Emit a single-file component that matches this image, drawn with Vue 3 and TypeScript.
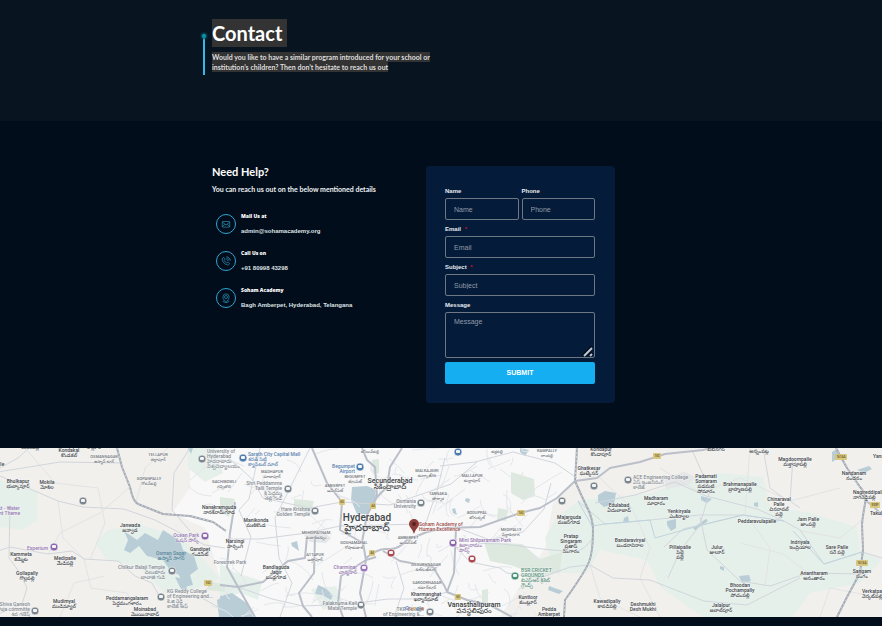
<script setup lang="ts">
import { ref } from 'vue'

type Kind = 'town' | 'area' | 'city' | 'metro' | 'grey' | 'violet' | 'blue' | 'red' | 'green' | 'water'
type Anchor = 'start' | 'middle' | 'end'
interface Place { x: number; y: number; kind: Kind; anchor: Anchor; lines: string[]; step: number }
interface Marker { x: number; y: number; color: string }

const name = ref('')
const phone = ref('')
const email = ref('')
const subject = ref('')
const message = ref('')

const contacts = [
  { icon: 'mail', title: 'Mail Us at', detail: 'admin@sohamacademy.org' },
  { icon: 'phone', title: 'Call Us on', detail: '+91 80998 43298' },
  { icon: 'pin', title: 'Soham Academy', detail: 'Bagh Amberpet, Hyderabad, Telangana' },
]

function place(x: number, y: number, text: string, kind: Kind = 'town', anchor: Anchor = 'middle'): Place {
  const step = kind === 'metro' ? 10 : kind === 'city' ? 6 : 5
  return { x, y, kind, anchor, lines: text.split('|'), step }
}

const places: Place[] = [
  place(69, 4, 'Kondakal|కొండకల్'),
  place(30, 1, 'శంకర్‌పల్లి'),
  place(94, 1, 'కొల్లూర్'),
  place(104, 10, 'OSMANNAGAR|ఉస్మాన్ నగర్', 'area'),
  place(158, 8, 'TELLAPUR|తెల్లాపూర్', 'area'),
  place(149, 32, 'GOPANPALLY|గోపన్‌పల్లి', 'area'),
  place(-12, 18, 'Mokille', 'town', 'start'),
  place(18, 35, 'Bhulkapur|భుల్కాపూర్'),
  place(47, 36, 'Mokila|మోకిల'),
  place(-8, 62, 'Nest - Water|ment Theme', 'violet', 'start'),
  place(130, 79, 'Janwada|జన్వాడ'),
  place(48, 102, 'Experium', 'violet', 'end'),
  place(199, 89, 'Ocean Park|ఓషన్ పార్క్', 'violet', 'end'),
  place(171, 107, 'Osman Sagar|ఉస్మాన్ సాగర్', 'water'),
  place(200, 103, 'Gandipet|గండిపేట్'),
  place(21, 108, 'Kammeta|కమ్మెట'),
  place(65, 112, 'Medipalle|మేడిపల్లె'),
  place(27, 127, 'Gollapally|గొల్లపల్లి'),
  place(165, 121, 'Chilkur Balaji Temple|చిలుకూరు|బాలాజీ గుడి', 'grey', 'end'),
  place(167, 145, 'KG Reddy College|of Engineering and...|కె.జి రెడ్డి|కాలేజ్ ఆఫ్', 'grey', 'start'),
  place(64, 155, 'Mudimyal|ముడిమ్యాల్'),
  place(127, 152, 'Peddamangalaram|పెద్దమంగళారం'),
  place(145, 163, 'Moinabad|మొయినాబాద్'),
  place(30, 158, 'Shiva Ganesh|Puja committe|శివ గణేష్', 'grey', 'end'),
  place(207, 5, 'University of|Hyderabad|హైదరాబాదు|విశ్వవిద్యాలయం', 'grey', 'start'),
  place(248, 8, 'Sarath City Capital Mall|శరత్ సిటీ|క్యాపిటల్ మాల్', 'blue', 'start'),
  place(272, 25, 'MADHAPUR|మాదాపూర్', 'area'),
  place(224, 35, 'GACHIBOWLI|గచ్చిబౌలి', 'area'),
  place(282, 37, 'Shri Peddamma|Talli Temple|శ్రీ పెద్దమ్మ|తల్లి గుడి', 'grey', 'end'),
  place(310, 63, 'Hare Krishna|Golden Temple', 'grey', 'end'),
  place(219, 61, 'Nanakramguda|నానక్‌రామ్‌గూడ'),
  place(256, 74, 'Manikonda|మణికొండ'),
  place(235, 95, 'Narsingi|నార్సింగి'),
  place(230, 116, 'Forestrek Park', 'grey'),
  place(316, 86, 'MEHDIPATNAM|మెహదీపట్నం', 'area'),
  place(315, 108, 'ATTAPUR|అత్తాపూర్', 'area'),
  place(276, 121, 'Bandlaguda|Jagir|బండ్లగూడ'),
  place(357, 121, 'Charminar|చార్మినార్', 'violet', 'end'),
  place(357, 157, 'Falaknuma Kali|Mata Temple', 'grey', 'end'),
  place(355, 20, 'Begumpet|Airport', 'blue', 'end'),
  place(370, 5, 'బోయిన్‌పల్లి', 'area'),
  place(355, 30, 'BEGUMPET|బేగంపేట్', 'area'),
  place(335, 39, 'AMEERPET|అమీర్‌పేట్', 'area'),
  place(390, 35, 'Secunderabad|సికింద్రాబాద్', 'city'),
  place(427, 24, 'MALKAJGIRI|మల్కాజ్‌గిరి', 'area'),
  place(367, 73, 'Hyderabad|హైదరాబాద్', 'metro'),
  place(354, 96, 'GOSHAMAHAL|గోషామహల్', 'area'),
  place(416, 55, 'Osmania|University', 'grey', 'end'),
  place(438, 47, 'TARNAKA|తార్నాక', 'area'),
  place(408, 91, 'AMBERPET|అంబర్‌పేట్', 'area'),
  place(419, 78, 'Soham Academy of|Human Excellence', 'red', 'start'),
  place(426, 118, 'DILSUKHNAGAR|దిల్‌సుఖ్‌నగర్', 'area'),
  place(427, 136, 'SAROORNAGAR|సరూర్‌నగర్', 'area'),
  place(426, 148, 'Kharmanghat|ఖర్మాన్‌ఘాట్'),
  place(424, 163, 'TKR College|of Engineering &...', 'grey', 'end'),
  place(497, 0, 'CHERLAPALLY|చర్లపల్లి', 'area'),
  place(547, 4, 'RAMPALLY|రాంపల్లి', 'area'),
  place(472, 29, 'MALLAPUR|మల్లాపూర్', 'area'),
  place(477, 66, 'BODUPPAL|బోడుప్పల్', 'area'),
  place(511, 83, 'MEDIPALLY|పీర్జాదిగూడ', 'area'),
  place(601, 3, 'Kondapur|కొండాపూర్'),
  place(589, 22, 'Ghatkesar|ఘట్కేసర్'),
  place(459, 94, 'Mini Shilparamam Park|శిల్పారామం|పార్క్', 'violet', 'start'),
  place(521, 124, 'BSR CRICKET|GROUNDS|బిఎస్ఆర్ క్రికెట్|గ్రౌండ్స్', 'green', 'start'),
  place(474, 159, 'Vanasthalipuram|వనస్థలిపురం', 'city'),
  place(528, 151, 'Kuntloor|కుంట్లూర్'),
  place(549, 163, 'Pedda|Amberpet'),
  place(569, 71, 'Majarguda|మజర్‌గూడ'),
  place(571, 90, 'Pratap|Singaram|ప్రతాప్|సింగారం'),
  place(619, 59, 'Edulabad|ఏదులాబాద్'),
  place(656, 52, 'Madharam|మాధారం'),
  place(630, 94, 'Bandaraviryal|బండరావిరాల'),
  place(633, 31, 'ACE Engineering College|ఏస్ ఇంజనీరింగ్|కాలేజ్', 'grey', 'start'),
  place(607, 155, 'Kawadipally|కావడిపల్లి'),
  place(643, 158, 'Deshmukhi|Desh Mukhi'),
  place(706, 30, 'Padamati|Somaram|పడమటి|సోమారం'),
  place(740, 38, 'Brahmanapalle|బ్రాహ్మణపల్లి'),
  place(759, 5, 'అన్నంపట్ల'),
  place(716, 3, 'బీబీనగర్'),
  place(795, 13, 'Magdoompalle|మక్తాపూపల్లి'),
  place(779, 53, 'Chinaraval|Palle|చినరావల్|పల్లె'),
  place(854, 27, 'Nandanam|నందనం'),
  place(873, 10, 'Yanambavi', 'town', 'start'),
  place(853, 46, 'Nagireddipalle|నాగిరెడ్డిపల్లి', 'town', 'start'),
  place(870, 67, 'Takulapally', 'town', 'start'),
  place(679, 65, 'Yenkiryala|ఎంకిర్యాల'),
  place(757, 75, 'Peddaravulapalle'),
  place(808, 73, 'Jam Palle|జాంపల్లె'),
  place(800, 96, 'Indriyala|ఇంద్రియాల'),
  place(837, 101, 'Sare Palle|సరే పల్లె'),
  place(680, 101, 'Pillaipalle|పిల్లై|పల్లె'),
  place(717, 101, 'Julur|జులూర్'),
  place(814, 127, 'Anantharam|అనంతారం'),
  place(862, 125, 'Sangam|సంగం'),
  place(740, 139, 'Bhoodan|Pochampally|పోచంపల్లి'),
  place(721, 159, 'Jalalpur|జలాల్‌పూర్'),
  place(862, 145, 'Verkatpally|వెర్కట్‌పల్లి', 'town', 'start'),
]

const grey = '#7c868e'
const markers: Marker[] = [
  { x: 83, y: 53, color: grey }, { x: 202, y: 11, color: grey }, { x: 172, y: 123, color: grey },
  { x: 161, y: 149, color: grey }, { x: 35, y: 163, color: grey }, { x: 288, y: 41, color: grey },
  { x: 315, y: 63, color: grey }, { x: 421, y: 55, color: grey }, { x: 361, y: 157, color: grey },
  { x: 430, y: 164, color: grey }, { x: 594, y: 38, color: grey }, { x: 562, y: 53, color: grey },
  { x: 628, y: 32, color: grey }, { x: 54, y: 99, color: '#8b68ac' }, { x: 205, y: 88, color: '#8b68ac' },
  { x: 364, y: 120, color: '#9b72bd' }, { x: 453, y: 95, color: '#8b68ac' }, { x: 243, y: 10, color: '#4d7bab' },
  { x: 360, y: 19, color: '#4d7bab' }, { x: 458, y: 4, color: '#4d7bab' }, { x: 391, y: 105, color: '#a84a50' },
  { x: 472, y: 111, color: '#a84a50' }, { x: 515, y: 128, color: '#4c8f79' },
]

const shields = [
  { x: 208, y: 135, text: '163' }, { x: 342, y: 54, text: '65' }, { x: 373, y: 58, text: '44' },
  { x: 372, y: 105, text: '44' }, { x: 458, y: 149, text: '65' }, { x: 521, y: 65, text: '163' },
  { x: 657, y: 8, text: '163' }, { x: 841, y: 9, text: '161AA' }, { x: 875, y: 57, text: '930P' },
  { x: 862, y: 115, text: '161AA' },
]

const expressways = [
  'M117 0 122 19 130 39Q133 54 138 56L163 66 190 68 213 74 226 83',
  'M577 0 575 33Q581 47 587 59T593 82Q593 104 589 114T565 152L564 169',
  'M836 0 847 20 860 39Q867 46 865 56T862 76L863 102 860 125 847 149 837 169',
]

const highways = [
  'M235 54 230 85 227 119 238 139 255 169',
  'M220 137 238 139 263 134 288 113 305 110 307 89',
  'M315 88 314 125 299 145 303 158 312 169',
  'M312 0 327 35 342 54 340 82 363 95 366 112 376 109',
  'M362 0 367 12 375 19 377 49 367 67 362 94',
  'M402 0 390 19 387 39 377 49',
  'M366 110Q378 100 388 101T407 92L427 84 445 80 480 79 520 65 540 60 557 50 575 33 597 30 610 20 640 14 665 6 703 2 718 -2',
  'M383 103 400 113 433 119 445 139 447 144 467 152 490 157 512 169',
  'M456 80 454 125 447 144',
  'M366 112 360 145 366 169',
  'M343 169 338 155 341 128 366 112',
  'M865 52 874 59 882 67',
]

const localRoads = [
  'M0 28 28 40 58 53 83 59 124 61 155 72 184 87 205 97 225 100',
  'M-2 103 10 99 48 106 72 103 84 111 118 113 135 128 152 135 162 153',
  'M10 57 9 110 20 125 27 140 22 156 -2 166',
  'M0 20 18 10 31 -2M-2 24 60 14 120 15',
  'M190 0 174 25 172 62 190 83M213 134 200 149 220 160',
  'M455 98 470 114 500 120 507 125 540 130 570 119 588 117',
  'M455 100Q480 92 520 98T577 103Q585 101 592 91',
  'M440 18 475 14 513 4 555 15 577 30',
  'M578 53 605 76 650 72 700 67 743 67 784 73 800 82 824 116 862 104 882 110',
  'M595 55 635 47 675 34 706 48 757 61 784 73',
  'M664 99 683 81 714 74 743 67',
  'M700 69 707 102 740 133 770 138 808 125 862 126',
  'M793 10 790 53 800 60M763 0 770 40 785 51',
  'M692 2 710 42 700 77 680 103 668 130',
  'M590 117 613 130 650 132 704 153 747 157 800 130',
  'M220 2 251 30 263 50 309 60 342 54 390 57 451 36 477 14',
  'M226 91 260 91 307 85 340 78 381 77 420 76',
  'M238 139 272 151 303 158 350 156 388 151 425 151 447 144',
  'M396 113 404 140 394 169M445 10 437 43 423 83',
  'M260 0 249 51 239 62 251 89 241 128',
  'M310 0 290 40 275 70 279 110 292 135 280 169',
  'M458 80 490 92 523 84 544 61 551 35',
]

/* Small repeatable generator for the faint street mesh of the city centre. */
function streetMesh(count: number): string {
  let seed = 71
  const next = (): number => {
    seed = (seed * 16807) % 2147483647
    return seed / 2147483647
  }
  const parts: string[] = []
  for (let i = 0; i < count; i++) {
    const x = Math.round(205 + next() * 350)
    const y = Math.round(next() * 169)
    const dx = Math.round((next() - 0.5) * 58)
    const dy = Math.round((next() - 0.5) * 50)
    const bend = Math.round((next() - 0.5) * 14)
    parts.push(`M${x} ${y}q${Math.round(dx / 2) + bend} ${Math.round(dy / 2) - bend} ${dx} ${dy}`)
  }
  return parts.join('')
}
const mesh = streetMesh(150)
</script>

<template>
  <main class="page">
    <header class="hero">
      <div class="wrap hero-row">
        <span class="accent" aria-hidden="true"></span>
        <div>
          <h1><span class="mark">Contact</span></h1>
          <p class="lead">
            <span class="mark">Would you like to have a similar program introduced for your school or</span><br />
            <span class="mark">institution’s children? Then don’t hesitate to reach us out</span>
          </p>
        </div>
      </div>
    </header>

    <section class="wrap content">
      <div class="help">
        <h2>Need Help?</h2>
        <p class="intro">You can reach us out on the below mentioned details</p>
        <ul class="contacts">
          <li v-for="c in contacts" :key="c.icon">
            <span class="ring">
              <svg v-if="c.icon === 'mail'" viewBox="0 0 16 16" aria-hidden="true">
                <rect x="2" y="4" width="12" height="9" rx="1" /><path d="M2 5l6 4.500 6-4.500M2 12.500l4-4M14 12.500l-4-4" />
              </svg>
              <svg v-else-if="c.icon === 'phone'" viewBox="0 0 16 16" aria-hidden="true">
                <path d="M4.200 2.200 6.300 5.300 5 7c1 2 2.100 3.100 4.100 4.100l1.700-1.300 3 2.100c-.5 1.700-1.700 2.500-3.100 2.400C6.200 13.800 2 9.200 1.900 5.200c0-1.400.8-2.600 2.300-3zM8.500 5.200c1.400.2 2.200 1 2.400 2.400M8.500 3.200c2.600.2 4.200 1.800 4.400 4.400M8.500 1.200c3.600.2 6.200 2.800 6.400 6.400" />
              </svg>
              <svg v-else viewBox="0 0 16 16" aria-hidden="true">
                <path d="M8 15C5 11.500 3 9 3 6.300a5 5 0 0 1 10 0C13 9 11 11.500 8 15z" /><circle cx="8" cy="6.400" r="2.400" /><path d="M5 12c-3 1.500-1 3 3 3s6-1.500 3-3" />
              </svg>
            </span>
            <div>
              <h3>{{ c.title }}</h3>
              <p>{{ c.detail }}</p>
            </div>
          </li>
        </ul>
      </div>

      <form class="card" @submit.prevent>
        <div class="pair">
          <div class="field">
            <label for="name">Name</label>
            <input id="name" v-model="name" type="text" placeholder="Name" />
          </div>
          <div class="field">
            <label for="phone">Phone</label>
            <input id="phone" v-model="phone" type="tel" placeholder="Phone" />
          </div>
        </div>
        <div class="field">
          <label for="email">Email <span class="req">*</span></label>
          <input id="email" v-model="email" type="email" placeholder="Email" required />
        </div>
        <div class="field">
          <label for="subject">Subject <span class="req">*</span></label>
          <input id="subject" v-model="subject" type="text" placeholder="Subject" required />
        </div>
        <div class="field area">
          <label for="message">Message</label>
          <textarea id="message" v-model="message" placeholder="Message"></textarea>
          <svg class="grip" viewBox="0 0 12 11" aria-hidden="true">
            <path class="grip-shade" d="M1 10 10 1M7 10l3-3" /><path class="grip-line" d="M2 10 10 2M8 10l2-2" />
          </svg>
        </div>
        <button type="submit">SUBMIT</button>
      </form>
    </section>

    <section class="map" aria-label="Hyderabad">
      <svg viewBox="0 0 882 169" preserveAspectRatio="xMidYMid slice">
        <rect width="882" height="169" fill="#f1f0ed" />
        <path fill="#f8f8f8" d="M190 0H575L578 30 553 55 545 100 500 169H248L220 130 205 80 172 65 190 40z" />
        <g fill="#e6f0eb">
          <path d="M0 32 37 43 38 72 22 82 0 79zM95 95 108 82 140 77 180 88 202 110 220 130 200 140 165 145 138 119 106 111zM188 0H215L223 25 205 34 188 20z" />
          <path d="M580 52 653 45 680 32 720 25 763 29 770 59 807 64 857 79 860 102 882 112 860 135 810 145 793 169H703L660 139 647 112 600 102 587 125 553 125 545 90 557 69z" />
          <path d="M220 115 234 124 262 133 258 152 241 145 220 150zM311 141l25-3 7 17-20 7z" />
        </g>
        <g fill="#dde8df">
          <path d="M511 24 534 31 535 48 523 52 511 45zM484 94 522 96 540 111 562 104 560 124 541 128 510 117 490 113zM482 142l6-1v16l-6 3zM220 49l15 2-6 18-9-5zM294 51l20 2-4 13-16-5zM209 134l16 2v8l-17-2zM372 12l7-1v14l-6 1zM498 60l10 2-2 11-9-1z" />
        </g>
        <path fill="#e4e6e7" d="M304 87l8-5 10 1 9 7-5 5-16-1zM664 30l20-6 12 5-8 8-22 4z" />
        <g fill="#b9cdd7">
          <path d="M124 83 137 92 145 85 158 92 163 82 180 93 183 102 194 108 198 121 190 127 193 137 184 139 179 127 170 122 163 112 147 108 139 98 130 105 124 102 128 92z" />
          <path d="M220 148 232 145 248 156 253 169H220zM352 39 367 38 377 42 375 57 367 66 357 66 351 52z" />
          <path d="M598 47 605 43 616 45 614 56 604 59 598 54zM667 73l9-2v9l-5 3-4-6zM739 128l10-1 2 6-9 2zM318 137l7 3 8 7-2 5-9-5-7-1zM549 138l14 5-4 3-11-4zM701 48l11 3-5 4-6-3zM520 0l9 2-4 6-5-4zM832 4l5-3 2 9-7 4zM857 22l12-4 3 3-8 4z" />
          <path d="M175 129l9 2 4 12-7-2zM217 152l8-4v21h-6zM291 95l6-2 2 10-7-5zM466 50l4 1-1 4-4-2zM452 61l3-1 2 7-4-2zM624 70l4-2 1 6-6 1zM188 0h5l-2 6zM754 55l4-1v5l-4-1zM720 118l4 1v4l-4-2z" />
        </g>
        <path d="M694 81 707 72" stroke="#b9cdd0" stroke-width="3" />
        <g fill="none" stroke-linejoin="round">
          <path :d="mesh" stroke="#e4e7eb" stroke-width="1" />
          <path d="M25 0 55 35 98 40 105 75 90 112M58 53 63 90 84 111M130 39 100 65 60 85 48 106M136 55 145 20 168 0M84 111 91 140 127 145 140 169M60 169 74 135 105 128M600 30 632 60 650 100 640 130 660 169M660 20 700 45 740 30 790 53 840 40M740 95 783 106 808 125M801 83 840 90 862 72M590 117 600 150 640 169M750 0 745 65 770 100 765 138M820 169 830 140 882 150" stroke="#e2e3e4" />
          <path v-for="r in localRoads" :key="r" :d="r" stroke="#d2d6dc" stroke-width="1" />
          <path d="M578 53 592 78 605 76 650 72 655 90 680 83 714 74 743 67 784 73M793 83 824 116 862 104" stroke="#bfd4dd" />
          <path v-for="r in highways" :key="r" :d="r" stroke="#babfc9" stroke-width="2" />
          <template v-for="r in expressways" :key="r">
            <path :d="r" stroke="#a3a9b3" stroke-width="2" />
            <path :d="r" stroke="#cfd3da" stroke-width="1" stroke-dasharray="2 2" />
          </template>
        </g>
        <g v-for="s in shields" :key="`${s.x}-${s.y}`">
          <rect :x="s.x - s.text.length - 1" :y="s.y - 3" :width="s.text.length * 2 + 2" height="6" rx="1" fill="#d9c77f" />
          <text class="shield" :x="s.x" :y="s.y + 1">{{ s.text }}</text>
        </g>
        <g v-for="m in markers" :key="`${m.x}-${m.y}`">
          <circle :cx="m.x" :cy="m.y" r="4" :fill="m.color" stroke="#fff" stroke-width="0.600" />
          <rect :x="m.x - 2" :y="m.y - 2" width="4" height="3" rx="1" fill="#f4f5f5" />
        </g>
        <text v-for="(p, i) in places" :key="i" :class="['place', p.kind]" :text-anchor="p.anchor">
          <tspan v-for="(line, n) in p.lines" :key="n" :x="p.x" :y="p.y + n * p.step">{{ line }}</tspan>
        </text>
        <path d="M414 86C412 80 409 79 409 76a5 5 0 0 1 10 0c0 3-3 4-5 10z" fill="#8d3d3a" />
        <circle cx="414" cy="76" r="2" fill="#532322" />
        <text class="brand" x="405" y="162">
          <tspan fill="#4b83cf">G</tspan><tspan fill="#cf5a50">o</tspan><tspan fill="#d4aa3d">o</tspan><tspan fill="#4b83cf">g</tspan><tspan fill="#4b9a63">l</tspan><tspan fill="#cf5a50">e</tspan>
        </text>
      </svg>
    </section>
  </main>
</template>

<style>
body {
  margin: 0;
  background: #010d1a;
}
</style>

<style scoped>
.page {
  min-height: 100vh;
  padding-bottom: 9px;
  box-sizing: border-box;
  background: #010d1a;
  color: #eef1f4;
  font-family: Lato, "Noto Sans", sans-serif;
}
h1, h2, h3, p, ul {
  margin: 0;
  padding: 0;
}
.wrap {
  width: 100%;
  max-width: 476px;
  margin: 0 auto;
  box-sizing: border-box;
}
.hero {
  background: #081521;
  padding: 19px 0 46px;
}
.hero-row {
  display: flex;
  gap: 7px;
}
.accent {
  position: relative;
  width: 2px;
  height: 37px;
  margin-top: 19px;
  background: #36b8ea;
}
.accent::before {
  content: "";
  position: absolute;
  top: -4px;
  left: -1px;
  width: 4px;
  height: 4px;
  border-radius: 50%;
  background: #0d93a8;
  box-shadow: 0 0 2px 1px #0b5969;
}
.mark {
  display: inline-block;
  background: #333;
}
h1 {
  font: 700 20px/28px Lato, sans-serif;
  color: #fff;
  height: 28px;
}
h1 .mark {
  padding-right: 5px;
}
.lead {
  margin-top: 5px;
  font-size: 7px;
  font-weight: 700;
  line-height: 10px;
  color: #dedede;
}
.lead .mark {
  vertical-align: top;
  white-space: nowrap;
}
.content {
  display: grid;
  grid-template-columns: minmax(0, 205px) minmax(0, 189px);
  column-gap: 9px;
  align-items: start;
  padding: 45px 9px;
}
h2 {
  font: 700 11px/12px Lato, sans-serif;
  color: #fff;
}
.intro {
  margin-top: 6px;
  font-size: 7px;
  font-weight: 700;
  line-height: 10px;
  white-space: nowrap;
}
.contacts {
  list-style: none;
  margin-top: 18px;
  padding-left: 4px;
  display: grid;
  gap: 13px;
}
.contacts li {
  display: flex;
  gap: 5px;
  height: 24px;
}
.ring {
  display: grid;
  place-items: center;
  box-sizing: border-box;
  width: 20px;
  height: 20px;
  margin-top: 2px;
  border: 1px solid #2fa5d5;
  border-radius: 50%;
}
.ring svg {
  width: 10px;
  height: 10px;
  fill: none;
  stroke: #2fa0cc;
  stroke-width: 1;
}
.contacts h3 {
  font: 800 5px/8px "Open Sans", sans-serif;
  color: #fff;
}
.contacts p {
  margin-top: 6px;
  font: 700 6px/10px "Liberation Sans", Arial, sans-serif;
  color: #dfe3e7;
  white-space: nowrap;
}
.card {
  display: grid;
  gap: 4px;
  padding: 20px 20px 19px 19px;
  border-radius: 4px;
  background: #041b39;
  font-family: "Liberation Sans", Arial, sans-serif;
}
.pair {
  display: grid;
  grid-template-columns: 1fr 1fr;
  gap: 3px;
}
.field {
  position: relative;
  display: grid;
  gap: 2px;
  min-width: 0;
}
label {
  font-size: 6px;
  font-weight: 700;
  line-height: 10px;
  color: #e8ecf1;
}
.req {
  margin-left: 2px;
  color: #d3122a;
}
input,
textarea {
  width: 100%;
  min-width: 0;
  box-sizing: border-box;
  border: 1px solid #6f7882;
  border-radius: 2px;
  background: transparent;
  color: #e8ecf1;
  font: 400 7px/10px "Liberation Sans", Arial, sans-serif;
  outline: none;
}
input {
  height: 22px;
  padding: 0 8px;
}
textarea {
  display: block;
  height: 46px;
  padding: 4px 8px;
  resize: none;
}
input::placeholder,
textarea::placeholder {
  color: #929ba8;
  opacity: 1;
}
.grip {
  position: absolute;
  right: 1px;
  bottom: 1px;
  width: 12px;
  height: 11px;
  fill: none;
}
.grip-shade {
  stroke: #020a16;
  stroke-width: 3;
}
.grip-line {
  stroke: #c3c8cf;
  stroke-width: 2;
}
button {
  height: 22px;
  padding: 0;
  border: 0;
  border-radius: 2px;
  background: #15aef1;
  color: #fff;
  font: 700 7px/10px "Liberation Sans", Arial, sans-serif;
  cursor: pointer;
}
.map {
  height: 169px;
  overflow: hidden;
}
.map svg {
  display: block;
  width: 100%;
  height: 100%;
}
.place {
  font: 500 5px Roboto, "Noto Sans Telugu", "Noto Sans", sans-serif;
  fill: #41454a;
  stroke: #f8f8f8;
  stroke-width: 1;
  stroke-opacity: 0.600;
  paint-order: stroke;
}
.place.area {
  font-size: 4px;
  fill: #70757b;
}
.place.city {
  font-size: 7px;
  fill: #383c40;
}
.place.metro {
  font-size: 10px;
  fill: #43474c;
}
.place.grey {
  fill: #858c94;
}
.place.violet {
  fill: #9677b3;
}
.place.blue {
  fill: #5c84b1;
}
.place.red {
  fill: #a14d4d;
}
.place.green {
  fill: #5b9480;
}
.place.water {
  fill: #5a8799;
  stroke: none;
}
.shield {
  font: 700 3px Roboto, sans-serif;
  text-anchor: middle;
  fill: #6d6337;
}
.brand {
  font: 500 6px Roboto, sans-serif;
}
</style>
